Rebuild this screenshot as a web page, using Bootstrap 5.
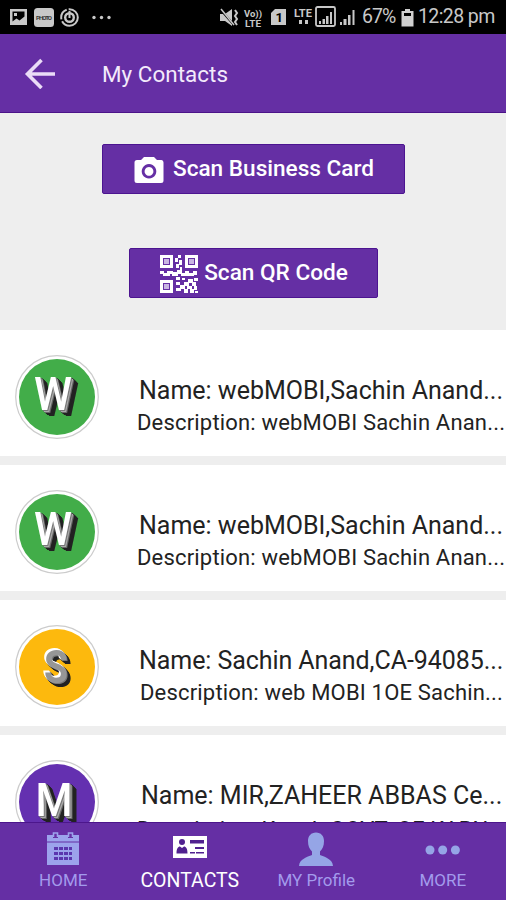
<!DOCTYPE html>
<html lang="en">
<head>
<meta charset="utf-8">
<meta name="viewport" content="width=device-width, initial-scale=1">
<title>My Contacts</title>
<link href="https://cdn.jsdelivr.net/npm/bootstrap@5.3.0/dist/css/bootstrap.min.css" rel="stylesheet">
<style>
body{font-family:Roboto,"Liberation Sans",sans-serif;background:#eee;height:900px;overflow:hidden}
svg{display:block;flex:none}
.app{width:506px;height:900px;overflow:hidden}
.status-bar{height:34px;background:#000;color:#c8c8c8}
.status-left{padding-left:10px}
.status-right{padding-right:10px}
.status-text{font-size:19.5px;line-height:38px;white-space:nowrap}
.percent{letter-spacing:-1px;width:35px}
.clock{letter-spacing:-.6px;width:78px}
.battery{margin-left:4px;margin-right:4px}
.app-bar{height:79px;background:#652fa4;border-bottom:1px solid #4b1389;padding-left:24px}
.app-title{font-size:22.4px;line-height:30px;margin-left:46px;padding-top:1px;color:#f3eafb;letter-spacing:.05px}
.actions{height:217px;padding-top:31px;gap:54px}
.scan-btn{height:50px;background:#652fa4;border:1px solid #4c1490;border-radius:2px;color:#fff;font-size:22.6px;font-weight:500;line-height:30px;white-space:nowrap;padding:0 0 0 2px}
.scan-card{width:303px;gap:9px}
.scan-card svg,.scan-qr svg{margin-top:2px}
.scan-qr{width:249px;gap:6px}
.contact-list{gap:9px}
.contact{height:126px;background:#fff;padding-left:15px;flex:none}
.avatar-art{margin-top:25px}
.contact-text{padding-left:40px;padding-top:45px;white-space:nowrap}
.contact-name{font-size:25px;line-height:32px;color:#222}
.contact-desc{font-size:22px;line-height:31px;color:#222;letter-spacing:.18px}
.n3{letter-spacing:-.07px}
.n4{padding-left:2px}
.d1{margin-left:-2px}
.d3{padding-left:1px}
.d4{margin-left:-2px;padding-top:2px}
.letter{font-weight:500;text-anchor:middle}
.letter-white{font-size:47px;fill:#fff;filter:drop-shadow(1px 1px 0 #777) drop-shadow(1px 1px 0 #aaa) drop-shadow(1px 1px 0 #666) drop-shadow(2px 2px 0 #222) drop-shadow(2px 1px 0 #222)}
.letter-steel{font-size:47px;font-weight:700;fill:#969696;filter:drop-shadow(-1px -1px 0 #fff) drop-shadow(-1px -1px 0 #fff) drop-shadow(1px 1px 0 #777) drop-shadow(2px 2px 0 #222) drop-shadow(1px 1px 0 #222)}
.bottom-nav{height:78px;background:#652fa4;border-top:1px solid #4c168c;color:#a39bec}
.tab{width:126.5px;padding-top:9px}
.tab-label{font-size:17px;line-height:22px;margin-top:3px;white-space:nowrap}
.tab.active{color:#fff}
.tab.active .tab-label{font-size:19.5px;margin-top:4px}
</style>
<script src="https://cdn.jsdelivr.net/npm/bootstrap@5.3.0/dist/js/bootstrap.bundle.min.js"></script>
</head>
<body>
<div class="app d-flex flex-column">
  <header class="flex-shrink-0">
    <div class="status-bar d-flex justify-content-between align-items-center">
      <svg class="status-left" width="126" height="34" viewBox="10 0 116 34" fill="#c8c8c8">
        <path fill-rule="evenodd" d="M10 9h17v16H10zM12.500 11.500v10l4-3 3 2 5-4v-5zM14 13h3v3h-3z"/>
        <rect x="34" y="8" width="20" height="19" rx="3.500"/>
        <text x="44" y="19.500" font-size="6" font-weight="700" text-anchor="middle" fill="#333" textLength="16">PHOTO</text>
        <circle cx="69.500" cy="17.500" r="8.300" fill="none" stroke="#c8c8c8" stroke-width="2" stroke-dasharray="22 2 12 2"/>
        <circle cx="69.500" cy="17.500" r="4.300" fill="none" stroke="#c8c8c8" stroke-width="2.400"/>
        <path d="M68.500 11h2v7h-2z"/>
        <circle cx="94" cy="17.500" r="1.700"/><circle cx="101.500" cy="17.500" r="1.700"/><circle cx="109" cy="17.500" r="1.700"/>
      </svg>
      <div class="status-right d-flex align-items-center">
        <svg width="143" height="34" viewBox="219 0 143 34" fill="#c8c8c8">
          <path d="M220 14h5l7-5v17l-7-5h-5z"/>
          <path d="M220 9l14 16" stroke="#000" stroke-width="2"/><path d="M221 9l13 16" stroke="#c8c8c8" stroke-width="1.500"/>
          <path d="M235 10l2 3-2 3 2 3-2 3 2 3" fill="none" stroke="#c8c8c8" stroke-width="2"/>
          <g font-weight="700" font-size="9.500"><text x="244" y="16.500" textLength="18" lengthAdjust="spacingAndGlyphs">Vo))</text><text x="245" y="26.500" textLength="16" lengthAdjust="spacingAndGlyphs">LTE</text></g>
          <path d="M275 9h11v16h-15V13z"/><text x="275.500" y="22" font-size="13" font-weight="700" fill="#000">1</text>
          <text x="294" y="17" font-size="10.500" font-weight="700" textLength="18" lengthAdjust="spacingAndGlyphs">LTE</text>
          <path d="M299 20h3v4h-3zM305 20h3v4h-3z"/>
          <rect x="316" y="7" width="19" height="19" rx="1.500" fill="none" stroke="#c8c8c8" stroke-width="1.800"/>
          <path d="M319 24v-3h2v3zM322.500 24v-5h2.500v5zM326 24v-8h2.500v8zM330 24V12h2v12z"/>
          <path d="M340 25v-3h2v3zM343.500 25v-6h3v6zM348 25v-10h2.500v10zM352.500 25V10h2v15z"/>
        </svg>
        <span class="status-text percent">67%</span>
        <svg class="battery" width="13" height="34" viewBox="0 0 13 34" fill="#d0d0d0"><path fill-rule="evenodd" d="M4 9h5v2h3.500v15.500H.5V11H4zM3 13v3h7v-3z"/></svg>
        <span class="status-text clock">12:28 pm</span>
      </div>
    </div>
    <nav class="app-bar d-flex align-items-center">
      <svg width="32" height="32" viewBox="0 0 32 32" fill="none" stroke="#eadcf7" stroke-width="3.600"><path d="M31 17H3M17.500 3L3.500 17l14 14"/></svg>
      <h1 class="app-title mb-0 fw-normal">My Contacts</h1>
    </nav>
  </header>
  <section class="actions d-flex flex-column align-items-center flex-shrink-0">
    <button class="btn scan-btn scan-card d-flex align-items-center justify-content-center">
      <svg width="30" height="26" viewBox="0 0 30 26"><path fill="#fff" fill-rule="evenodd" d="M10 0h10l3 3h4.500A2.500 2.500 0 0 1 29.500 5.500v18A2.500 2.500 0 0 1 27 26H3a2.500 2.500 0 0 1-2.500-2.500v-18A2.500 2.500 0 0 1 3 3h4zM15 7a7.300 7.300 0 1 0 .01 0zM15 10a4.400 4.400 0 1 1-.01 0z"/></svg>
      <span>Scan Business Card</span>
    </button>
    <button class="btn scan-btn scan-qr d-flex align-items-center justify-content-center">
      <svg width="38" height="38" viewBox="0 0 38 38" fill="#fff">
        <path fill-rule="evenodd" d="M0 0h13v13H0zM3 3v7h7V3zM25 0h13v13H25zM28 3v7h7V3zM0 25h13v13H0zM3 28v7h7v-7z"/>
        <path fill="#c9b5e2" d="M4 4h5v5H4zM29 4h5v5h-5zM4 29h5v5H4z"/>
        <path d="M18 0h3v3h-3zM15 3h3v4h-3zM19 5h3v5h-3zM16 9h3v4h-3zM20 12h2v3h-2zM0 16h4v3H0zM3 18h7v3H3zM7 16h6v3H7zM12 17h6v4h-6zM17 15h5v4h-5zM21 18h7v3h-7zM25 16h4v3h-4zM28 18h6v3h-6zM33 16h4v4h-4zM16 22h4v3h-4zM22 23h3v2h-3zM28 24h5v4h-5zM34 23h4v3h-4zM24 27h5v4h-5zM32 27h4v4h-4zM20 30h5v4h-5zM27 31h5v3h-5zM16 33h5v3h-5zM16 27h4v3h-4zM24 34h4v4h-4zM30 34h4v4h-4zM34 31h3v4h-3zM35 36h3v2h-3z"/>
      </svg>
      <span>Scan QR Code</span>
    </button>
  </section>
  <main class="contact-list d-flex flex-column flex-grow-1 overflow-hidden">
    <article class="contact d-flex align-items-start">
      <svg class="avatar-art" width="84" height="84" viewBox="0 0 84 84"><circle cx="42" cy="42" r="41.300" fill="#fff" stroke="#ccc" stroke-width="1.200"/><circle cx="42" cy="42" r="38" fill="#42ad49"/><text class="letter letter-white" x="38" y="55" textLength="38" lengthAdjust="spacingAndGlyphs">W</text></svg>
      <div class="contact-text"><div class="contact-name n1">Name: webMOBI,Sachin Anand...</div><div class="contact-desc d1">Description: webMOBI Sachin Anan...</div></div>
    </article>
    <article class="contact d-flex align-items-start">
      <svg class="avatar-art" width="84" height="84" viewBox="0 0 84 84"><circle cx="42" cy="42" r="41.300" fill="#fff" stroke="#ccc" stroke-width="1.200"/><circle cx="42" cy="42" r="38" fill="#42ad49"/><text class="letter letter-white" x="38" y="55" textLength="38" lengthAdjust="spacingAndGlyphs">W</text></svg>
      <div class="contact-text"><div class="contact-name n1">Name: webMOBI,Sachin Anand...</div><div class="contact-desc d1">Description: webMOBI Sachin Anan...</div></div>
    </article>
    <article class="contact d-flex align-items-start">
      <svg class="avatar-art" width="84" height="84" viewBox="0 0 84 84"><circle cx="42" cy="42" r="41.300" fill="#fff" stroke="#ccc" stroke-width="1.200"/><circle cx="42" cy="42" r="38" fill="#fdb90d"/><text class="letter letter-steel" x="41" y="57.500" textLength="24" lengthAdjust="spacingAndGlyphs">S</text></svg>
      <div class="contact-text"><div class="contact-name n3">Name: Sachin Anand,CA-94085...</div><div class="contact-desc d3">Description: web MOBI 1OE Sachin...</div></div>
    </article>
    <article class="contact d-flex align-items-start">
      <svg class="avatar-art" width="84" height="84" viewBox="0 0 84 84"><circle cx="42" cy="42" r="41.300" fill="#fff" stroke="#ccc" stroke-width="1.200"/><circle cx="42" cy="42" r="38" fill="#6430b0"/><text class="letter letter-white" x="39" y="56" textLength="37" lengthAdjust="spacingAndGlyphs">M</text></svg>
      <div class="contact-text"><div class="contact-name n4">Name: MIR,ZAHEER ABBAS Ce...</div><div class="contact-desc d4">Description: K tech GOVT. OF KARN...</div></div>
    </article>
  </main>
  <nav class="bottom-nav d-flex flex-shrink-0">
    <div class="tab d-flex flex-column align-items-center">
      <svg width="32" height="34" viewBox="0 0 32 34"><path fill="#9ca3ec" d="M0 3h6v3h5V3h10v3h5V3h6v30H0z"/><path fill="none" stroke="#9ca3ec" stroke-width="1.600" d="M6.500 5V1h4v4M21.500 5V1h4v4"/><path stroke="#652fa4" d="M0 10h32"/><path fill="#5b36ae" d="M7 15h4v3H7zM12 15h4v3h-4zM17 15h4v3h-4zM22 15h3v3h-3zM7 20h4v3H7zM12 20h4v3h-4zM17 20h4v3h-4zM22 20h3v3h-3zM7 25h4v3H7zM12 25h4v3h-4zM17 25h4v3h-4zM22 25h3v3h-3z"/></svg>
      <span class="tab-label t1">HOME</span>
    </div>
    <div class="tab active d-flex flex-column align-items-center">
      <svg width="36" height="34" viewBox="0 0 36 34"><rect x="1" y="4" width="34" height="22" fill="#fff"/><g fill="#50218f"><circle cx="10" cy="10" r="3"/><path d="M4.500 21.500c0-5 1.500-7 3.500-7l2 1.500 2-1.500c2 0 3.500 2 3.500 7zM18 8h14v3.500H18zM23 15h9v2h-9zM18 20h5v1.500h-5zM24 20h8v1.500h-8z"/></g></svg>
      <span class="tab-label t2">CONTACTS</span>
    </div>
    <div class="tab d-flex flex-column align-items-center">
      <svg width="34" height="34" viewBox="0 0 34 34"><path fill="#95a5e6" d="M17 .5c5 0 8 3.500 8 8.500 0 5-1.500 8-4 10.500V23c5 2 12.500 4 13 11H0c.5-7 8-9 13-11v-3.500C10.500 17 9 14 9 9 9 4 12 .5 17 .5z"/></svg>
      <span class="tab-label t3">MY Profile</span>
    </div>
    <div class="tab d-flex flex-column align-items-center">
      <svg width="36" height="34" viewBox="0 0 36 34" fill="#95a5e6"><circle cx="5" cy="18" r="4.500"/><circle cx="17.700" cy="18" r="4.500"/><circle cx="30.400" cy="18" r="4.500"/></svg>
      <span class="tab-label t4">MORE</span>
    </div>
  </nav>
</div>
</body>
</html>
